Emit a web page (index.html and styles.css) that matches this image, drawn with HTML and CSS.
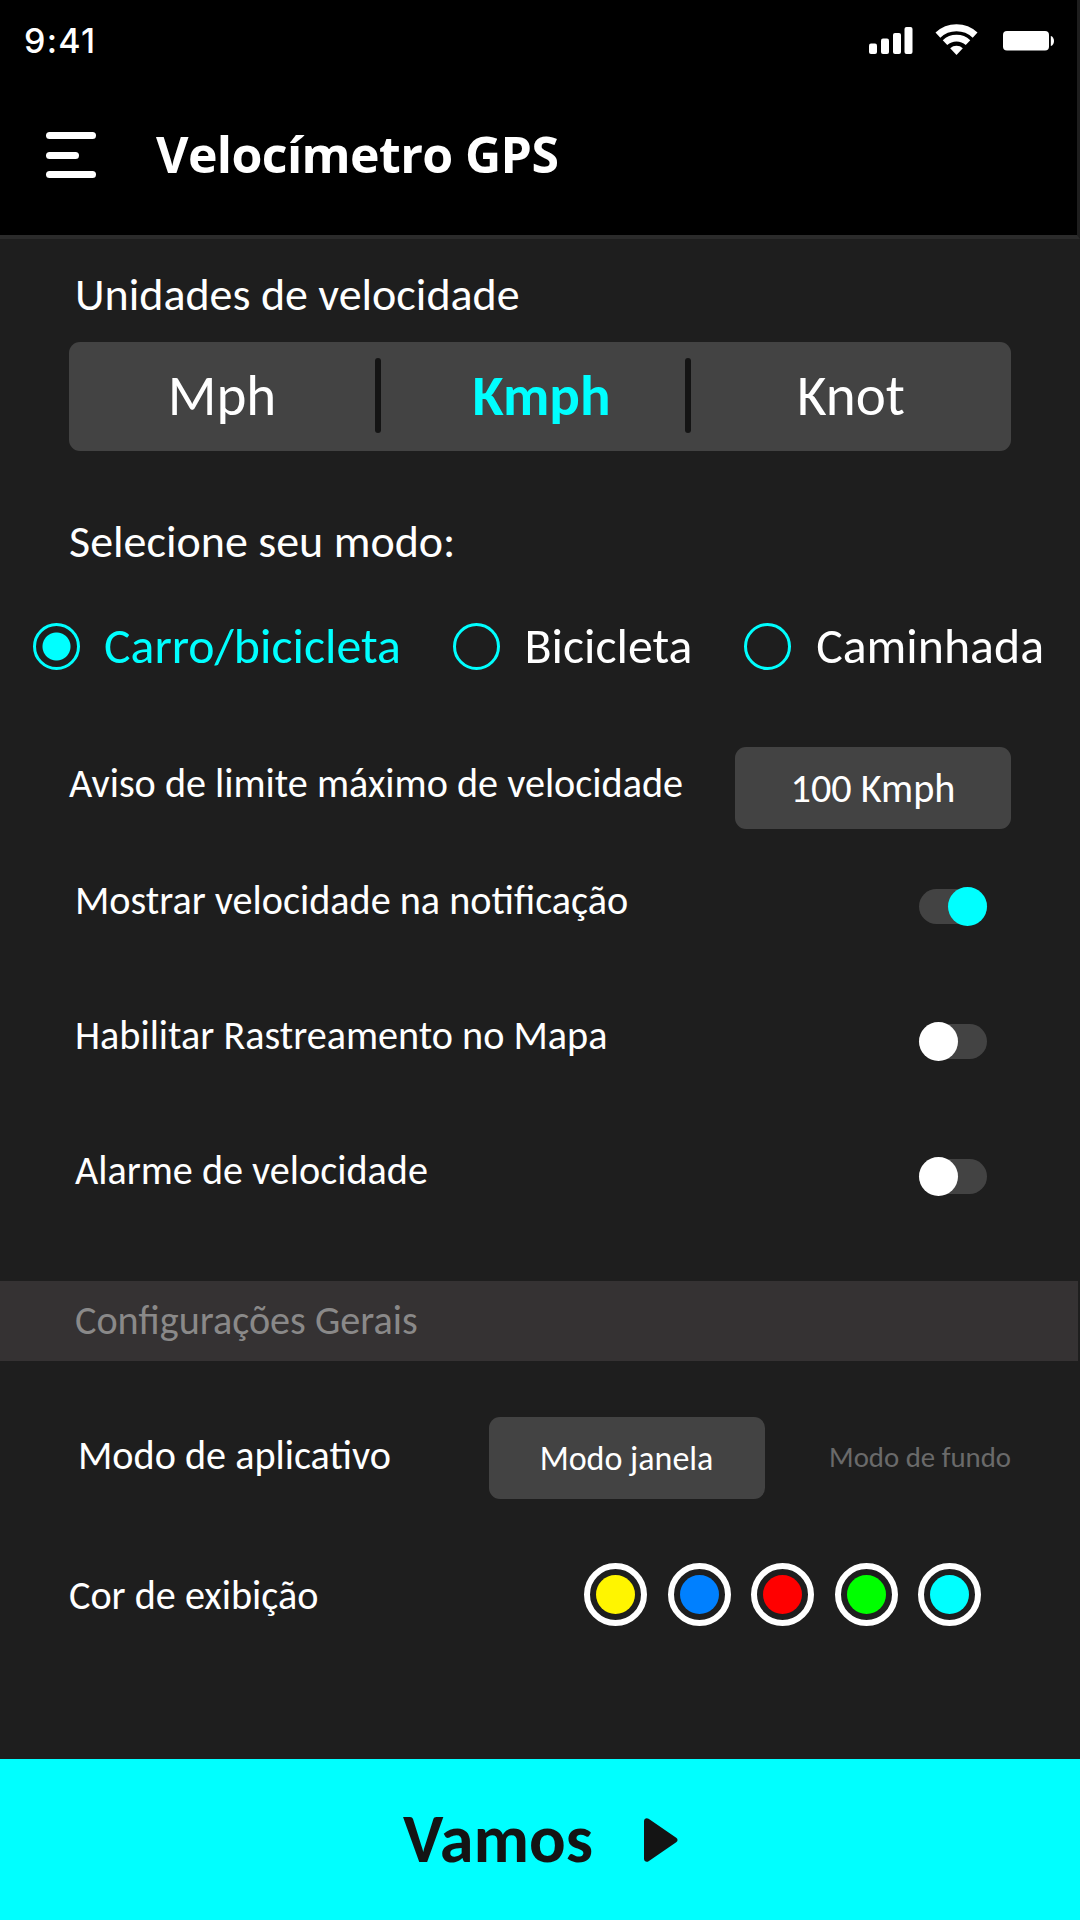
FILE: index.html
```
<!DOCTYPE html>
<html lang="pt-BR">
<head>
  <meta charset="UTF-8" />
  <meta name="viewport" content="width=device-width, initial-scale=1.0"/>
  <title>Velocímetro GPS</title>
  <link rel="stylesheet" href="styles.css">
</head>
<body>

<header class="header">
  <div class="status-bar">
    <span class="time">9:41</span>
    <svg class="status-icons" width="186" height="34" viewBox="0 -2 186 34" fill="#fff">
      <!-- signal -->
      <rect x="0" y="17.500" width="8" height="10.500" rx="2"/>
      <rect x="12" y="12.500" width="8" height="15.500" rx="2"/>
      <rect x="24" y="7" width="8" height="21" rx="2"/>
      <rect x="35.500" y="1" width="8" height="27" rx="2"/>
      <!-- wifi -->
      <g fill="none" stroke="#fff">
        <path d="M68.900 9.100A27.200 27.200 0 0 1 106.100 9.100" stroke-width="7"/>
        <path d="M76 16.700A16.800 16.800 0 0 1 99 16.700" stroke-width="6.600"/>
      </g>
      <path d="M81.200 22.200A9.300 9.300 0 0 1 93.800 22.200L87.500 29z"/>
      <!-- battery -->
      <rect x="134" y="5" width="46" height="19.500" rx="4"/>
      <path d="M181.800 10c1.900.4 3.200 2.600 3.200 5s-1.300 4.600-3.200 5z"/>
    </svg>
  </div>
  <div class="nav">
    <div class="menu-icon"><span></span><span class="short"></span><span></span></div>
    <h1>Velocímetro GPS</h1>
  </div>
</header>

<main class="settings">
  <h2 class="indent">Unidades de velocidade</h2>
  <div class="units">
    <div class="unit">Mph</div>
    <div class="divider"></div>
    <div class="unit active">Kmph</div>
    <div class="divider"></div>
    <div class="unit">Knot</div>
  </div>

  <h2 class="mode-title">Selecione seu modo:</h2>
  <div class="modes">
    <div class="mode selected"><span class="radio"></span>Carro/bicicleta</div>
    <div class="mode"><span class="radio"></span>Bicicleta</div>
    <div class="mode"><span class="radio"></span>Caminhada</div>
  </div>

  <div class="row limit-row">
    <span class="label">Aviso de limite máximo de velocidade</span>
    <div class="button">100 Kmph</div>
  </div>

  <div class="row toggle-row">
    <span class="label indent">Mostrar velocidade na notificação</span>
    <div class="toggle on"></div>
  </div>
  <div class="row toggle-row">
    <span class="label indent">Habilitar Rastreamento no Mapa</span>
    <div class="toggle"></div>
  </div>
  <div class="row toggle-row">
    <span class="label indent">Alarme de velocidade</span>
    <div class="toggle"></div>
  </div>

  <div class="section-title">Configurações Gerais</div>

  <div class="row app-row">
    <span class="label">Modo de aplicativo</span>
    <div class="button small">Modo janela</div>
    <span class="muted">Modo de fundo</span>
  </div>

  <div class="row color-row">
    <span class="label">Cor de exibição</span>
    <div class="colors">
      <span class="color yellow"></span>
      <span class="color blue"></span>
      <span class="color red"></span>
      <span class="color green"></span>
      <span class="color cyan"></span>
    </div>
  </div>
</main>

<footer class="go">
  <span>Vamos</span>
  <svg width="34" height="44" viewBox="0 0 34 44" fill="#141414">
    <path d="M0 3.200C0 .6 2.600-.6 4.600.8L32.200 19.800c1.800 1.200 1.800 3.200 0 4.400L4.600 43.200C2.600 44.600 0 43.400 0 40.800z"/>
  </svg>
</footer>

</body>
</html>
```
FILE: styles.css
```
* {
  box-sizing: border-box;
}
body {
  margin: 0;
  width: 1080px;
  height: 1920px;
  display: flex;
  flex-direction: column;
  overflow: hidden;
  font-family: Carlito, Calibri, Lato, sans-serif;
  background-color: #1e1e1e;
  color: white;
}
h1, h2 {
  margin: 0;
}

/* header */
.header {
  height: 239px;
  background-color: black;
  border-bottom: 4px solid #2b2b2b;
  border-right: 3px solid #1e1e1e;
}
.status-bar {
  display: flex;
  justify-content: space-between;
  align-items: center;
  height: 82px;
  padding: 0 22px 0 24px;
}
.time {
  font-family: Inter, sans-serif;
  font-size: 34px;
  font-weight: 500;
  letter-spacing: 1.3px;
  padding-bottom: 1px;
}
.nav {
  display: flex;
  align-items: center;
  height: 146px;
  padding-left: 46px;
}
.menu-icon {
  display: flex;
  flex-direction: column;
  justify-content: space-between;
  width: 50px;
  height: 46px;
  margin-right: 60px;
}
.menu-icon span {
  height: 7px;
  border-radius: 4px;
  background-color: white;
}
.menu-icon .short {
  width: 33px;
}
.nav h1 {
  font-family: "Open Sans", sans-serif;
  font-size: 50px;
  line-height: 60px;
  letter-spacing: -0.6px;
  padding-bottom: 2px;
}

/* settings */
.settings {
  flex: 1;
  padding-top: 32px;
}
.settings h2 {
  margin-left: 69px;
  font-size: 46px;
  font-weight: normal;
  line-height: 46px;
}
.settings h2.indent {
  margin-left: 75px;
}
.units {
  display: grid;
  grid-template-columns: 306px 6px 304px 6px 320px;
  align-items: center;
  height: 109px;
  margin: 25px 69px 0;
  padding-bottom: 3px;
  border-radius: 11px;
  background-color: #434343;
}
.unit {
  text-align: center;
  font-size: 57px;
}
.unit.active {
  padding-left: 17px;
  color: cyan;
  font-weight: bold;
}
.divider {
  width: 6px;
  height: 75px;
  border-radius: 3px;
  background-color: #141414;
}
.settings .mode-title {
  margin-top: 67px;
}
.modes {
  display: flex;
  justify-content: space-between;
  height: 47px;
  margin-top: 59px;
  padding: 0 36px 0 33px;
}
.mode {
  display: flex;
  align-items: center;
  font-size: 49.8px;
  line-height: 45px;
}
.radio {
  width: 47px;
  height: 47px;
  margin-right: 25px;
  border: 3px solid cyan;
  border-radius: 50%;
}
.selected {
  color: cyan;
}
.selected .radio {
  margin-right: 24px;
  background: radial-gradient(circle, cyan 13.5px, transparent 14.5px);
}
.row {
  display: flex;
  align-items: center;
  justify-content: space-between;
  padding: 0 69px;
}
.label {
  font-size: 40.2px;
  line-height: 40px;
  padding-bottom: 8px;
}
.button {
  display: flex;
  align-items: center;
  justify-content: center;
  width: 276px;
  height: 82px;
  border-radius: 11px;
  background-color: #434343;
  font-size: 40.2px;
}
.limit-row {
  margin-top: 77px;
  margin-bottom: 10px;
}
.toggle-row {
  height: 135px;
  padding-right: 93px;
}
.toggle-row .label {
  padding-bottom: 11px;
}
.label.indent {
  margin-left: 6px;
}
.toggle {
  position: relative;
  width: 68px;
  height: 35px;
  border-radius: 18px;
  background-color: #434343;
}
.toggle::after {
  content: "";
  position: absolute;
  left: 0;
  top: -2px;
  width: 39px;
  height: 39px;
  border-radius: 50%;
  background-color: white;
}
.toggle.on::after {
  left: auto;
  right: 0;
  background-color: cyan;
}
.section-title {
  height: 80px;
  margin: 37px 2px 0 0;
  padding-left: 75px;
  background-color: #353233;
  color: #8a8989;
  font-size: 40.2px;
  line-height: 80px;
}
.app-row {
  margin-top: 56px;
  padding-left: 78px;
}
.app-row .label {
  width: 346px;
  padding-bottom: 5px;
}
.button.small {
  font-size: 34px;
}
.muted {
  color: #6a6a6a;
  font-size: 28.8px;
  padding-bottom: 1px;
}
.color-row {
  margin-top: 64px;
  padding-right: 99px;
}
.color-row .label {
  padding-top: 3px;
  padding-bottom: 0;
}
.colors {
  display: flex;
  gap: 20.4px;
}
.color {
  width: 63px;
  height: 63px;
  padding: 6px;
  border: 6px solid white;
  border-radius: 50%;
  background-clip: content-box;
}
.yellow {
  background-color: #fff500;
}
.blue {
  background-color: #0080ff;
}
.red {
  background-color: red;
}
.green {
  background-color: lime;
}
.cyan {
  background-color: cyan;
}

/* bottom button */
.go {
  display: flex;
  align-items: center;
  justify-content: center;
  gap: 51px;
  height: 161px;
  padding-left: 1px;
  background-color: cyan;
  color: #141414;
  font-size: 68.3px;
  font-weight: bold;
}
.go span {
  line-height: 68px;
  padding-bottom: 2px;
}
```
